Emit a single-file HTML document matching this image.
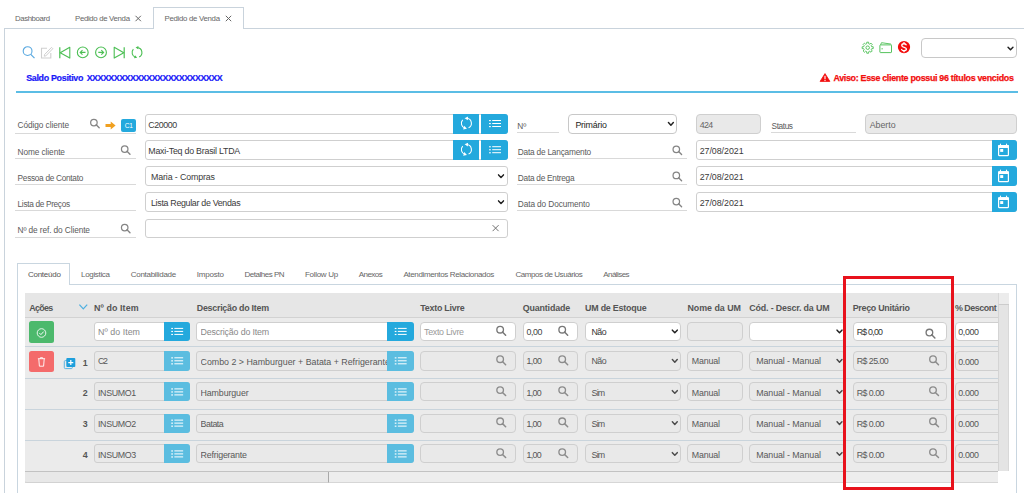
<!DOCTYPE html><html><head><meta charset="utf-8"><style>html,body{margin:0;padding:0;width:1024px;height:493px;overflow:hidden;background:#fff;font-family:"Liberation Sans", sans-serif;}</style></head><body>
<div style="position:absolute;left:15.00px;top:13.72px;height:9.36px;line-height:9.36px;font-size:7.8px;color:#666;font-weight:normal;white-space:nowrap;letter-spacing:-0.395px;">Dashboard</div>
<div style="position:absolute;left:75.00px;top:13.72px;height:9.36px;line-height:9.36px;font-size:7.8px;color:#666;font-weight:normal;white-space:nowrap;letter-spacing:-0.316px;">Pedido de Venda</div>
<svg style="position:absolute;left:138px;top:18px;overflow:visible" width="1" height="1"><g transform="translate(0.200 0.500)"><path d="M-2.7 -2.7L2.7 2.7M2.7 -2.7L-2.7 2.7" stroke="#666" stroke-width="1.0"/></g></svg>
<div style="position:absolute;left:4.00px;top:28.00px;width:1020.00px;height:1.00px;background:#c9d3dc"></div>
<div style="position:absolute;left:153.00px;top:7.00px;width:90.50px;height:22.00px;box-sizing:border-box;background:#fff;border:1px solid #c9d3dc;border-bottom:none"></div>
<div style="position:absolute;left:164.50px;top:13.72px;height:9.36px;line-height:9.36px;font-size:7.8px;color:#666;font-weight:normal;white-space:nowrap;letter-spacing:-0.280px;">Pedido de Venda</div>
<svg style="position:absolute;left:228px;top:18px;overflow:visible" width="1" height="1"><g transform="translate(0.500 0.500)"><path d="M-2.7 -2.7L2.7 2.7M2.7 -2.7L-2.7 2.7" stroke="#666" stroke-width="1.0"/></g></svg>
<div style="position:absolute;left:4.00px;top:28.00px;width:1.00px;height:465.00px;background:#c9d3dc"></div>
<svg style="position:absolute;left:20px;top:42px;overflow:visible" width="20" height="20"><g transform="translate(0.000 0.000)"><circle cx="7.6" cy="9.1" r="4.4" fill="none" stroke="#5aa9e0" stroke-width="1.1"/><line x1="10.8" y1="12.3" x2="14.5" y2="16.2" stroke="#5aa9e0" stroke-width="1.2"/></g></svg>
<svg style="position:absolute;left:40px;top:46px;overflow:visible" width="14" height="14"><g transform="translate(0.000 0.000)"><path d="M7 2.3H1.5V12H10.8V7" fill="none" stroke="#cfcfcf" stroke-width="1.1"/><path d="M4.5 8.6L11.5 1.4L12.8 2.7L5.8 9.9L4.3 10.2Z" fill="none" stroke="#cfcfcf" stroke-width="1"/></g></svg>
<svg style="position:absolute;left:58px;top:46px;overflow:visible" width="14" height="14"><g transform="translate(0.000 0.000)"><line x1="1.8" y1="1.2" x2="1.8" y2="12.2" stroke="#4cbf54" stroke-width="1.2"/><path d="M2.2 6.7L11.8 1.3V12.1Z" fill="none" stroke="#4cbf54" stroke-width="1.1" stroke-linejoin="round"/></g></svg>
<svg style="position:absolute;left:76px;top:46px;overflow:visible" width="14" height="14"><g transform="translate(0.000 0.000)"><circle cx="6.75" cy="6.4" r="5.4" fill="none" stroke="#4cbf54" stroke-width="1.1"/><path d="M9.5 6.4H4.3M6.5 4.2L4.2 6.4L6.5 8.6" fill="none" stroke="#4cbf54" stroke-width="1.1"/></g></svg>
<svg style="position:absolute;left:95px;top:46px;overflow:visible" width="14" height="14"><g transform="translate(0.000 0.000)"><circle cx="6" cy="6.4" r="5.4" fill="none" stroke="#4cbf54" stroke-width="1.1"/><path d="M3.3 6.4H8.5M6.3 4.2L8.6 6.4L6.3 8.6" fill="none" stroke="#4cbf54" stroke-width="1.1"/></g></svg>
<svg style="position:absolute;left:112px;top:46px;overflow:visible" width="14" height="14"><g transform="translate(0.000 0.000)"><line x1="12.2" y1="1.2" x2="12.2" y2="12.2" stroke="#4cbf54" stroke-width="1.2"/><path d="M11.8 6.7L2.2 1.3V12.1Z" fill="none" stroke="#4cbf54" stroke-width="1.1" stroke-linejoin="round"/></g></svg>
<svg style="position:absolute;left:137px;top:52px;overflow:visible" width="1" height="1"><g transform="translate(0.000 0.500)"><path d="M-3.64 -3.28A4.9 4.9 0 0 0 -1.51 4.66" fill="none" stroke="#4cbf54" stroke-width="1.1"/><path d="M2.15 4.40A4.9 4.9 0 0 0 0.34 -4.89" fill="none" stroke="#4cbf54" stroke-width="1.1"/><path d="M0.20 5.22L-2.96 5.87L-1.97 2.83Z" fill="#4cbf54"/><path d="M-1.45 -5.01L1.45 -6.41L1.23 -3.22Z" fill="#4cbf54"/></g></svg>
<div style="position:absolute;left:26.20px;top:73.26px;height:10.68px;line-height:10.68px;font-size:8.9px;color:#1818f8;font-weight:bold;white-space:nowrap;letter-spacing:-0.302px;-webkit-text-stroke:0.2px #1818f8">Saldo Positivo</div>
<div style="position:absolute;left:86.70px;top:73.26px;height:10.68px;line-height:10.68px;font-size:8.9px;color:#1818f8;font-weight:bold;white-space:nowrap;letter-spacing:-0.504px;-webkit-text-stroke:0.2px #1818f8">XXXXXXXXXXXXXXXXXXXXXXXXX</div>
<svg style="position:absolute;left:867px;top:47px;overflow:visible" width="1" height="1"><g transform="translate(0.700 0.700)"><path d="M3.98 -0.99L5.52 -0.92L5.52 0.92L3.98 0.99L3.51 2.11L4.56 3.26L3.26 4.56L2.11 3.51L0.99 3.98L0.92 5.52L-0.92 5.52L-0.99 3.98L-2.11 3.51L-3.26 4.56L-4.56 3.26L-3.51 2.11L-3.98 0.99L-5.52 0.92L-5.52 -0.92L-3.98 -0.99L-3.51 -2.11L-4.56 -3.26L-3.26 -4.56L-2.11 -3.51L-0.99 -3.98L-0.92 -5.52L0.92 -5.52L0.99 -3.98L2.11 -3.51L3.26 -4.56L4.56 -3.26L3.51 -2.11Z" fill="none" stroke="#4cbf54" stroke-width="0.9" stroke-linejoin="round"/><circle cx="0" cy="0" r="1.75" fill="none" stroke="#4cbf54" stroke-width="0.9"/></g></svg>
<svg style="position:absolute;left:879px;top:41px;overflow:visible" width="14" height="12"><g transform="translate(0.400 0.800)"><rect x="0.5" y="3.1" width="11.6" height="7.7" rx="0.6" fill="none" stroke="#4cbf54" stroke-width="0.95"/><path d="M1.2 3.1L2.1 0.9L11.2 2.2L12.1 3.1" fill="none" stroke="#4cbf54" stroke-width="0.9" stroke-linejoin="round"/><rect x="2.2" y="6.3" width="1" height="1.3" fill="#4cbf54"/></g></svg>
<svg style="position:absolute;left:904px;top:47px;overflow:visible" width="1" height="1"><g transform="translate(0.000 0.100)"><circle cx="0" cy="0" r="6.15" fill="#f20c0c"/><path d="M2.2 -2.3C1.6 -3.2 0.8 -3.4 0 -3.4C-1.3 -3.4 -2.2 -2.7 -2.2 -1.7C-2.2 0.9 2.4 -0.4 2.4 2.0C2.4 3.0 1.4 3.6 0 3.6C-1 3.6 -1.9 3.2 -2.4 2.4" fill="none" stroke="#fff" stroke-width="1.35" stroke-linecap="round"/><path d="M0 -5V-3.4M0 3.6V5.1" stroke="#fff" stroke-width="1.2"/></g></svg>
<div style="position:absolute;left:921.40px;top:38.20px;width:95.50px;height:20.20px;box-sizing:border-box;background:#fff;border:1px solid #c8c8c8;border-radius:4px;"></div>
<svg style="position:absolute;left:1010px;top:48px;overflow:visible" width="1" height="1"><g transform="translate(0.500 0.500)"><path d="M-2.45 -1.27L0 1.35L2.45 -1.27" fill="none" stroke="#222" stroke-width="1.45" stroke-linecap="round" stroke-linejoin="round"/></g></svg>
<svg style="position:absolute;left:819px;top:72px;overflow:visible" width="12" height="11"><g transform="translate(0.000 0.000)"><path d="M6 1.6L10.9 9.4H1.1Z" fill="#f20e0e" stroke="#f20e0e" stroke-width="0.8" stroke-linejoin="round"/><rect x="5.45" y="3.8" width="1.1" height="3.5" fill="#fff"/><rect x="5.45" y="8" width="1.1" height="1.1" fill="#fff"/></g></svg>
<div style="position:absolute;left:833.40px;top:73.16px;height:10.68px;line-height:10.68px;font-size:8.9px;color:#f20e0e;font-weight:bold;white-space:nowrap;letter-spacing:-0.301px;-webkit-text-stroke:0.25px #f20e0e">Aviso: Esse cliente possui 96 títulos vencidos</div>
<div style="position:absolute;left:15.70px;top:91.00px;width:1002.30px;height:2.00px;background:#5bbde5"></div>
<div style="position:absolute;left:17.60px;top:121.17px;height:9.96px;line-height:9.96px;font-size:8.3px;color:#5a5a5a;font-weight:normal;white-space:nowrap;letter-spacing:-0.085px;">Código cliente</div>
<div style="position:absolute;left:15.00px;top:132.90px;width:120.50px;height:1.00px;background:#d9d9d9"></div>
<svg style="position:absolute;left:93px;top:122px;overflow:visible" width="1" height="1"><g transform="translate(0.900 0.500)"><circle cx="0" cy="0" r="3.25" fill="none" stroke="#858585" stroke-width="1.25"/><line x1="2.30" y1="2.30" x2="5.29" y2="5.29" stroke="#858585" stroke-width="1.38" stroke-linecap="round"/></g></svg>
<svg style="position:absolute;left:105px;top:121px;overflow:visible" width="11" height="9"><g transform="translate(0.500 0.400)"><path d="M0 2.6H5.2V0L10.1 4.1L5.2 8.2V5.6H0Z" fill="#f0a020"/></g></svg>
<div style="position:absolute;left:121.00px;top:119.40px;width:14.50px;height:12.50px;background:#24a9dd;border-radius:2px"></div>
<div style="position:absolute;left:124.70px;top:121.84px;height:7.92px;line-height:7.92px;font-size:6.6px;color:#fff;font-weight:normal;white-space:nowrap;letter-spacing:-0.2px">C1</div>
<div style="position:absolute;left:17.60px;top:147.57px;height:9.96px;line-height:9.96px;font-size:8.3px;color:#5a5a5a;font-weight:normal;white-space:nowrap;letter-spacing:-0.094px;">Nome cliente</div>
<div style="position:absolute;left:15.00px;top:158.00px;width:120.50px;height:1.00px;background:#d9d9d9"></div>
<svg style="position:absolute;left:124px;top:149px;overflow:visible" width="1" height="1"><g transform="translate(0.700 0.000)"><circle cx="0" cy="0" r="3.25" fill="none" stroke="#858585" stroke-width="1.25"/><line x1="2.30" y1="2.30" x2="5.29" y2="5.29" stroke="#858585" stroke-width="1.38" stroke-linecap="round"/></g></svg>
<div style="position:absolute;left:17.60px;top:173.87px;height:9.96px;line-height:9.96px;font-size:8.3px;color:#5a5a5a;font-weight:normal;white-space:nowrap;letter-spacing:-0.306px;">Pessoa de Contato</div>
<div style="position:absolute;left:15.00px;top:183.90px;width:120.50px;height:1.00px;background:#d9d9d9"></div>
<div style="position:absolute;left:17.60px;top:199.87px;height:9.96px;line-height:9.96px;font-size:8.3px;color:#5a5a5a;font-weight:normal;white-space:nowrap;letter-spacing:-0.336px;">Lista de Preços</div>
<div style="position:absolute;left:15.00px;top:209.90px;width:120.50px;height:1.00px;background:#d9d9d9"></div>
<div style="position:absolute;left:17.60px;top:225.77px;height:9.96px;line-height:9.96px;font-size:8.3px;color:#5a5a5a;font-weight:normal;white-space:nowrap;letter-spacing:-0.107px;">Nº de ref. do Cliente</div>
<div style="position:absolute;left:15.00px;top:236.50px;width:120.50px;height:1.00px;background:#d9d9d9"></div>
<svg style="position:absolute;left:124px;top:227px;overflow:visible" width="1" height="1"><g transform="translate(0.700 0.500)"><circle cx="0" cy="0" r="3.25" fill="none" stroke="#858585" stroke-width="1.25"/><line x1="2.30" y1="2.30" x2="5.29" y2="5.29" stroke="#858585" stroke-width="1.38" stroke-linecap="round"/></g></svg>
<div style="position:absolute;left:145.30px;top:114.00px;width:362.30px;height:19.70px;box-sizing:border-box;background:#fff;border:1px solid #cfcfcf;border-radius:3px;"></div>
<div style="position:absolute;left:148.30px;top:119.74px;height:10.62px;line-height:10.62px;font-size:8.85px;color:#3a3a3a;font-weight:normal;white-space:nowrap;letter-spacing:-0.400px;">C20000</div>
<div style="position:absolute;left:452.50px;top:114.00px;width:26.20px;height:19.70px;background:#24a9dd"></div>
<div style="position:absolute;left:481.20px;top:114.00px;width:26.40px;height:19.70px;background:#24a9dd;border-radius:0 3px 3px 0"></div>
<svg style="position:absolute;left:466px;top:123px;overflow:visible" width="1" height="1"><g transform="translate(0.400 0.300)"><path d="M-3.72 -3.35A5.0 5.0 0 0 0 -1.55 4.76" fill="none" stroke="#fff" stroke-width="1.05"/><path d="M2.19 4.49A5.0 5.0 0 0 0 0.35 -4.99" fill="none" stroke="#fff" stroke-width="1.05"/><path d="M0.51 5.42L-3.28 6.21L-2.09 2.56Z" fill="#fff"/><path d="M-1.81 -5.14L1.68 -6.82L1.41 -2.99Z" fill="#fff"/></g></svg>
<svg style="position:absolute;left:495px;top:123px;overflow:visible" width="1" height="1"><g transform="translate(0.050 0.500)"><rect x="-5.95" y="-3.50" width="1.7" height="1.15" fill="#fff"/><rect x="-2.85" y="-3.50" width="8.80" height="1.0" fill="#fff"/><rect x="-5.95" y="-0.50" width="1.7" height="1.15" fill="#fff"/><rect x="-2.85" y="-0.50" width="8.80" height="1.0" fill="#fff"/><rect x="-5.95" y="2.50" width="1.7" height="1.15" fill="#fff"/><rect x="-2.85" y="2.50" width="8.80" height="1.0" fill="#fff"/></g></svg>
<div style="position:absolute;left:145.30px;top:140.20px;width:362.30px;height:19.70px;box-sizing:border-box;background:#fff;border:1px solid #cfcfcf;border-radius:3px;"></div>
<div style="position:absolute;left:148.30px;top:145.94px;height:10.62px;line-height:10.62px;font-size:8.85px;color:#3a3a3a;font-weight:normal;white-space:nowrap;letter-spacing:-0.237px;">Maxi-Teq do Brasil LTDA</div>
<div style="position:absolute;left:452.50px;top:140.20px;width:26.20px;height:19.70px;background:#24a9dd"></div>
<div style="position:absolute;left:481.20px;top:140.20px;width:26.40px;height:19.70px;background:#24a9dd;border-radius:0 3px 3px 0"></div>
<svg style="position:absolute;left:466px;top:149px;overflow:visible" width="1" height="1"><g transform="translate(0.400 0.500)"><path d="M-3.72 -3.35A5.0 5.0 0 0 0 -1.55 4.76" fill="none" stroke="#fff" stroke-width="1.05"/><path d="M2.19 4.49A5.0 5.0 0 0 0 0.35 -4.99" fill="none" stroke="#fff" stroke-width="1.05"/><path d="M0.51 5.42L-3.28 6.21L-2.09 2.56Z" fill="#fff"/><path d="M-1.81 -5.14L1.68 -6.82L1.41 -2.99Z" fill="#fff"/></g></svg>
<svg style="position:absolute;left:495px;top:149px;overflow:visible" width="1" height="1"><g transform="translate(0.050 0.700)"><rect x="-5.95" y="-3.50" width="1.7" height="1.15" fill="#fff"/><rect x="-2.85" y="-3.50" width="8.80" height="1.0" fill="#fff"/><rect x="-5.95" y="-0.50" width="1.7" height="1.15" fill="#fff"/><rect x="-2.85" y="-0.50" width="8.80" height="1.0" fill="#fff"/><rect x="-5.95" y="2.50" width="1.7" height="1.15" fill="#fff"/><rect x="-2.85" y="2.50" width="8.80" height="1.0" fill="#fff"/></g></svg>
<div style="position:absolute;left:145.30px;top:166.30px;width:362.30px;height:19.70px;box-sizing:border-box;background:#fff;border:1px solid #cfcfcf;border-radius:3px;"></div>
<div style="position:absolute;left:151.00px;top:172.04px;height:10.62px;line-height:10.62px;font-size:8.85px;color:#3a3a3a;font-weight:normal;white-space:nowrap;letter-spacing:-0.135px;">Maria - Compras</div>
<svg style="position:absolute;left:501px;top:176px;overflow:visible" width="1" height="1"><g transform="translate(0.000 0.150)"><path d="M-2.45 -1.27L0 1.35L2.45 -1.27" fill="none" stroke="#222" stroke-width="1.45" stroke-linecap="round" stroke-linejoin="round"/></g></svg>
<div style="position:absolute;left:145.30px;top:192.30px;width:362.30px;height:19.70px;box-sizing:border-box;background:#fff;border:1px solid #cfcfcf;border-radius:3px;"></div>
<div style="position:absolute;left:151.00px;top:198.04px;height:10.62px;line-height:10.62px;font-size:8.85px;color:#3a3a3a;font-weight:normal;white-space:nowrap;letter-spacing:-0.307px;">Lista Regular de Vendas</div>
<svg style="position:absolute;left:501px;top:202px;overflow:visible" width="1" height="1"><g transform="translate(0.000 0.150)"><path d="M-2.45 -1.27L0 1.35L2.45 -1.27" fill="none" stroke="#222" stroke-width="1.45" stroke-linecap="round" stroke-linejoin="round"/></g></svg>
<div style="position:absolute;left:145.30px;top:218.60px;width:362.30px;height:19.70px;box-sizing:border-box;background:#fff;border:1px solid #cfcfcf;border-radius:3px;"></div>
<svg style="position:absolute;left:495px;top:228px;overflow:visible" width="1" height="1"><g transform="translate(0.600 0.150)"><path d="M-3.0 -3.0L3.0 3.0M3.0 -3.0L-3.0 3.0" stroke="#6a6a6a" stroke-width="0.95"/></g></svg>
<div style="position:absolute;left:517.20px;top:121.57px;height:9.96px;line-height:9.96px;font-size:8.3px;color:#5a5a5a;font-weight:normal;white-space:nowrap;">Nº</div>
<div style="position:absolute;left:517.00px;top:131.80px;width:42.00px;height:1.00px;background:#d9d9d9"></div>
<div style="position:absolute;left:568.40px;top:114.00px;width:108.50px;height:19.70px;box-sizing:border-box;background:#fff;border:1px solid #c8c8c8;border-radius:4px;"></div>
<div style="position:absolute;left:575.40px;top:119.74px;height:10.62px;line-height:10.62px;font-size:8.85px;color:#222;font-weight:normal;white-space:nowrap;letter-spacing:-0.192px;">Primário</div>
<svg style="position:absolute;left:670px;top:123px;overflow:visible" width="1" height="1"><g transform="translate(0.900 0.800)"><path d="M-2.45 -1.27L0 1.35L2.45 -1.27" fill="none" stroke="#222" stroke-width="1.45" stroke-linecap="round" stroke-linejoin="round"/></g></svg>
<div style="position:absolute;left:696.20px;top:114.00px;width:65.20px;height:19.70px;box-sizing:border-box;background:#e9e9e9;border:1px solid #cfcfcf;border-radius:4px;"></div>
<div style="position:absolute;left:699.70px;top:119.74px;height:10.62px;line-height:10.62px;font-size:8.85px;color:#666;font-weight:normal;white-space:nowrap;letter-spacing:-0.633px;">424</div>
<div style="position:absolute;left:771.50px;top:121.57px;height:9.96px;line-height:9.96px;font-size:8.3px;color:#5a5a5a;font-weight:normal;white-space:nowrap;letter-spacing:-0.406px;">Status</div>
<div style="position:absolute;left:771.00px;top:131.80px;width:85.00px;height:1.00px;background:#d9d9d9"></div>
<div style="position:absolute;left:865.30px;top:114.00px;width:151.30px;height:19.70px;box-sizing:border-box;background:#e9e9e9;border:1px solid #cfcfcf;border-radius:4px;"></div>
<div style="position:absolute;left:869.70px;top:119.74px;height:10.62px;line-height:10.62px;font-size:8.85px;color:#666;font-weight:normal;white-space:nowrap;letter-spacing:-0.035px;">Aberto</div>
<div style="position:absolute;left:517.80px;top:147.57px;height:9.96px;line-height:9.96px;font-size:8.3px;color:#5a5a5a;font-weight:normal;white-space:nowrap;letter-spacing:-0.215px;">Data de Lançamento</div>
<div style="position:absolute;left:517.00px;top:158.00px;width:169.60px;height:1.00px;background:#d9d9d9"></div>
<svg style="position:absolute;left:676px;top:149px;overflow:visible" width="1" height="1"><g transform="translate(0.300 0.300)"><circle cx="0" cy="0" r="3.25" fill="none" stroke="#858585" stroke-width="1.25"/><line x1="2.30" y1="2.30" x2="5.29" y2="5.29" stroke="#858585" stroke-width="1.38" stroke-linecap="round"/></g></svg>
<div style="position:absolute;left:696.20px;top:140.20px;width:320.40px;height:19.70px;box-sizing:border-box;background:#fff;border:1px solid #cfcfcf;border-radius:3px;"></div>
<div style="position:absolute;left:699.70px;top:145.94px;height:10.62px;line-height:10.62px;font-size:8.85px;color:#3a3a3a;font-weight:normal;white-space:nowrap;letter-spacing:-0.044px;">27/08/2021</div>
<div style="position:absolute;left:992.20px;top:140.20px;width:24.40px;height:19.70px;background:#24a9dd;border-radius:0 3px 3px 0"></div>
<svg style="position:absolute;left:1003px;top:150px;overflow:visible" width="1" height="1"><g transform="translate(0.500 0.450)"><rect x="-4.9" y="-4.75" width="9.8" height="9.9" rx="0.9" fill="none" stroke="#fff" stroke-width="1.2"/><rect x="-5.5" y="-5.35" width="11" height="2.9" rx="0.8" fill="#fff"/><path d="M-3.8 -5.2L-3.3 -7H-2.8L-2.3 -5.2ZM2.3 -5.2L2.8 -7H3.3L3.8 -5.2Z" fill="#fff"/><rect x="-3.3" y="-1.45" width="3" height="2.9" fill="#fff"/></g></svg>
<div style="position:absolute;left:517.80px;top:173.87px;height:9.96px;line-height:9.96px;font-size:8.3px;color:#5a5a5a;font-weight:normal;white-space:nowrap;letter-spacing:-0.260px;">Data de Entrega</div>
<div style="position:absolute;left:517.00px;top:184.10px;width:169.60px;height:1.00px;background:#d9d9d9"></div>
<svg style="position:absolute;left:676px;top:175px;overflow:visible" width="1" height="1"><g transform="translate(0.300 0.400)"><circle cx="0" cy="0" r="3.25" fill="none" stroke="#858585" stroke-width="1.25"/><line x1="2.30" y1="2.30" x2="5.29" y2="5.29" stroke="#858585" stroke-width="1.38" stroke-linecap="round"/></g></svg>
<div style="position:absolute;left:696.20px;top:166.30px;width:320.40px;height:19.70px;box-sizing:border-box;background:#fff;border:1px solid #cfcfcf;border-radius:3px;"></div>
<div style="position:absolute;left:699.70px;top:172.04px;height:10.62px;line-height:10.62px;font-size:8.85px;color:#3a3a3a;font-weight:normal;white-space:nowrap;letter-spacing:-0.044px;">27/08/2021</div>
<div style="position:absolute;left:992.20px;top:166.30px;width:24.40px;height:19.70px;background:#24a9dd;border-radius:0 3px 3px 0"></div>
<svg style="position:absolute;left:1003px;top:176px;overflow:visible" width="1" height="1"><g transform="translate(0.500 0.550)"><rect x="-4.9" y="-4.75" width="9.8" height="9.9" rx="0.9" fill="none" stroke="#fff" stroke-width="1.2"/><rect x="-5.5" y="-5.35" width="11" height="2.9" rx="0.8" fill="#fff"/><path d="M-3.8 -5.2L-3.3 -7H-2.8L-2.3 -5.2ZM2.3 -5.2L2.8 -7H3.3L3.8 -5.2Z" fill="#fff"/><rect x="-3.3" y="-1.45" width="3" height="2.9" fill="#fff"/></g></svg>
<div style="position:absolute;left:517.80px;top:199.57px;height:9.96px;line-height:9.96px;font-size:8.3px;color:#5a5a5a;font-weight:normal;white-space:nowrap;letter-spacing:-0.108px;">Data do Documento</div>
<div style="position:absolute;left:517.00px;top:210.20px;width:169.60px;height:1.00px;background:#d9d9d9"></div>
<svg style="position:absolute;left:676px;top:201px;overflow:visible" width="1" height="1"><g transform="translate(0.300 0.500)"><circle cx="0" cy="0" r="3.25" fill="none" stroke="#858585" stroke-width="1.25"/><line x1="2.30" y1="2.30" x2="5.29" y2="5.29" stroke="#858585" stroke-width="1.38" stroke-linecap="round"/></g></svg>
<div style="position:absolute;left:696.20px;top:192.30px;width:320.40px;height:19.70px;box-sizing:border-box;background:#fff;border:1px solid #cfcfcf;border-radius:3px;"></div>
<div style="position:absolute;left:699.70px;top:198.04px;height:10.62px;line-height:10.62px;font-size:8.85px;color:#3a3a3a;font-weight:normal;white-space:nowrap;letter-spacing:-0.044px;">27/08/2021</div>
<div style="position:absolute;left:992.20px;top:192.30px;width:24.40px;height:19.70px;background:#24a9dd;border-radius:0 3px 3px 0"></div>
<svg style="position:absolute;left:1003px;top:202px;overflow:visible" width="1" height="1"><g transform="translate(0.500 0.550)"><rect x="-4.9" y="-4.75" width="9.8" height="9.9" rx="0.9" fill="none" stroke="#fff" stroke-width="1.2"/><rect x="-5.5" y="-5.35" width="11" height="2.9" rx="0.8" fill="#fff"/><path d="M-3.8 -5.2L-3.3 -7H-2.8L-2.3 -5.2ZM2.3 -5.2L2.8 -7H3.3L3.8 -5.2Z" fill="#fff"/><rect x="-3.3" y="-1.45" width="3" height="2.9" fill="#fff"/></g></svg>
<div style="position:absolute;left:17.40px;top:284.00px;width:999.40px;height:1.00px;background:#c9d6e0"></div>
<div style="position:absolute;left:17.40px;top:263.00px;width:1.00px;height:230.00px;background:#c9d6e0"></div>
<div style="position:absolute;left:1016.30px;top:284.00px;width:1.00px;height:209.00px;background:#c9d6e0"></div>
<div style="position:absolute;left:17.40px;top:263.00px;width:52.50px;height:22.00px;box-sizing:border-box;background:#fff;border:1px solid #c9d6e0;border-bottom:none"></div>
<div style="position:absolute;left:27.90px;top:270.05px;height:9.60px;line-height:9.60px;font-size:8.0px;color:#555;font-weight:normal;white-space:nowrap;letter-spacing:-0.242px;">Conteúdo</div>
<div style="position:absolute;left:81.00px;top:270.05px;height:9.60px;line-height:9.60px;font-size:8.0px;color:#666;font-weight:normal;white-space:nowrap;letter-spacing:-0.322px;">Logistica</div>
<div style="position:absolute;left:130.80px;top:270.05px;height:9.60px;line-height:9.60px;font-size:8.0px;color:#666;font-weight:normal;white-space:nowrap;letter-spacing:-0.294px;">Contabilidade</div>
<div style="position:absolute;left:196.70px;top:270.05px;height:9.60px;line-height:9.60px;font-size:8.0px;color:#666;font-weight:normal;white-space:nowrap;letter-spacing:-0.193px;">Imposto</div>
<div style="position:absolute;left:244.40px;top:270.05px;height:9.60px;line-height:9.60px;font-size:8.0px;color:#666;font-weight:normal;white-space:nowrap;letter-spacing:-0.471px;">Detalhes PN</div>
<div style="position:absolute;left:305.00px;top:270.05px;height:9.60px;line-height:9.60px;font-size:8.0px;color:#666;font-weight:normal;white-space:nowrap;letter-spacing:-0.296px;">Follow Up</div>
<div style="position:absolute;left:358.70px;top:270.05px;height:9.60px;line-height:9.60px;font-size:8.0px;color:#666;font-weight:normal;white-space:nowrap;letter-spacing:-0.537px;">Anexos</div>
<div style="position:absolute;left:403.40px;top:270.05px;height:9.60px;line-height:9.60px;font-size:8.0px;color:#666;font-weight:normal;white-space:nowrap;letter-spacing:-0.363px;">Atendimentos Relacionados</div>
<div style="position:absolute;left:515.40px;top:270.05px;height:9.60px;line-height:9.60px;font-size:8.0px;color:#666;font-weight:normal;white-space:nowrap;letter-spacing:-0.429px;">Campos de Usuários</div>
<div style="position:absolute;left:603.30px;top:270.05px;height:9.60px;line-height:9.60px;font-size:8.0px;color:#666;font-weight:normal;white-space:nowrap;letter-spacing:-0.563px;">Análises</div>
<div style="position:absolute;left:25.00px;top:293.00px;width:973.00px;height:178.50px;background:#ebebeb"></div>
<div style="position:absolute;left:25.00px;top:293.00px;width:973.00px;height:24.50px;background:#e6e6e6"></div>
<div style="position:absolute;left:25.00px;top:316.80px;width:973.00px;height:1.60px;background:#d2d2d2"></div>
<div style="position:absolute;left:29.20px;top:302.51px;height:10.68px;line-height:10.68px;font-size:8.9px;color:#555;font-weight:bold;white-space:nowrap;letter-spacing:-0.678px;">Ações</div>
<div style="position:absolute;left:94.00px;top:302.51px;height:10.68px;line-height:10.68px;font-size:8.9px;color:#555;font-weight:bold;white-space:nowrap;letter-spacing:0.100px;">Nº do Item</div>
<div style="position:absolute;left:196.80px;top:302.51px;height:10.68px;line-height:10.68px;font-size:8.9px;color:#555;font-weight:bold;white-space:nowrap;letter-spacing:-0.260px;">Descrição do Item</div>
<div style="position:absolute;left:420.20px;top:302.51px;height:10.68px;line-height:10.68px;font-size:8.9px;color:#555;font-weight:bold;white-space:nowrap;letter-spacing:-0.222px;">Texto Livre</div>
<div style="position:absolute;left:522.80px;top:302.51px;height:10.68px;line-height:10.68px;font-size:8.9px;color:#555;font-weight:bold;white-space:nowrap;letter-spacing:-0.162px;">Quantidade</div>
<div style="position:absolute;left:585.00px;top:302.51px;height:10.68px;line-height:10.68px;font-size:8.9px;color:#555;font-weight:bold;white-space:nowrap;letter-spacing:-0.207px;">UM de Estoque</div>
<div style="position:absolute;left:687.40px;top:302.51px;height:10.68px;line-height:10.68px;font-size:8.9px;color:#555;font-weight:bold;white-space:nowrap;letter-spacing:-0.022px;">Nome da UM</div>
<div style="position:absolute;left:749.30px;top:302.51px;height:10.68px;line-height:10.68px;font-size:8.9px;color:#555;font-weight:bold;white-space:nowrap;letter-spacing:-0.171px;">Cód. - Descr. da UM</div>
<div style="position:absolute;left:852.70px;top:302.51px;height:10.68px;line-height:10.68px;font-size:8.9px;color:#555;font-weight:bold;white-space:nowrap;letter-spacing:-0.272px;">Preço Unitário</div>
<div style="position:absolute;left:954.90px;top:302.51px;height:10.68px;line-height:10.68px;font-size:8.9px;color:#555;font-weight:bold;white-space:nowrap;letter-spacing:-0.437px;">% Descont</div>
<svg style="position:absolute;left:83px;top:306px;overflow:visible" width="1" height="1"><g transform="translate(0.300 0.800)"><path d="M-3.9 -2.145L0 2.145L3.9 -2.145" fill="none" stroke="#4fb0e0" stroke-width="1.25"/></g></svg>
<div style="position:absolute;left:25.00px;top:345.65px;width:973.00px;height:1.70px;background:#c9d4dc"></div>
<div style="position:absolute;left:25.00px;top:377.90px;width:973.00px;height:1.20px;background:#c9d4dc"></div>
<div style="position:absolute;left:25.00px;top:408.90px;width:973.00px;height:1.20px;background:#c9d4dc"></div>
<div style="position:absolute;left:25.00px;top:440.20px;width:973.00px;height:1.20px;background:#c9d4dc"></div>
<div style="position:absolute;left:25.00px;top:471.00px;width:973.00px;height:1.40px;background:#c2c2c2"></div>
<div style="position:absolute;left:28.90px;top:321.30px;width:25.10px;height:21.80px;background:#4cb96c;border-radius:2.5px"></div>
<svg style="position:absolute;left:41px;top:333px;overflow:visible" width="1" height="1"><g transform="translate(0.500 0.000)"><circle cx="0" cy="0" r="4.3" fill="none" stroke="#fff" stroke-width="0.85"/><path d="M-2.1 0.1L-0.6 1.6L2.2 -1.4" fill="none" stroke="#fff" stroke-width="0.95"/></g></svg>
<div style="position:absolute;left:94.20px;top:321.60px;width:96.00px;height:19.60px;box-sizing:border-box;background:#fff;border:1px solid #cfcfcf;border-radius:3px;"></div>
<div style="position:absolute;left:163.50px;top:321.60px;width:26.60px;height:19.60px;background:#24a9dd;border-radius:0 3px 3px 0"></div>
<svg style="position:absolute;left:177px;top:331px;overflow:visible" width="1" height="1"><g transform="translate(0.200 0.400)"><rect x="-5.95" y="-3.50" width="1.7" height="1.15" fill="#fff"/><rect x="-2.85" y="-3.50" width="8.80" height="1.0" fill="#fff"/><rect x="-5.95" y="-0.50" width="1.7" height="1.15" fill="#fff"/><rect x="-2.85" y="-0.50" width="8.80" height="1.0" fill="#fff"/><rect x="-5.95" y="2.50" width="1.7" height="1.15" fill="#fff"/><rect x="-2.85" y="2.50" width="8.80" height="1.0" fill="#fff"/></g></svg>
<div style="position:absolute;left:98.00px;top:327.09px;height:10.62px;line-height:10.62px;font-size:8.85px;color:#888;font-weight:normal;white-space:nowrap;letter-spacing:0.045px;">Nº do Item</div>
<div style="position:absolute;left:196.40px;top:321.60px;width:217.60px;height:19.60px;box-sizing:border-box;background:#fff;border:1px solid #cfcfcf;border-radius:3px;"></div>
<div style="position:absolute;left:200.5px;top:321.6px;width:186.5px;height:19.6px;overflow:hidden">
<div style="position:absolute;left:0.00px;top:5.69px;height:10.62px;line-height:10.62px;font-size:8.85px;color:#888;font-weight:normal;white-space:nowrap;letter-spacing:-0.164px;">Descrição do Item</div>
</div>
<div style="position:absolute;left:387.00px;top:321.60px;width:27.00px;height:19.60px;background:#24a9dd;border-radius:0 3px 3px 0"></div>
<svg style="position:absolute;left:400px;top:331px;overflow:visible" width="1" height="1"><g transform="translate(0.700 0.400)"><rect x="-5.95" y="-3.50" width="1.7" height="1.15" fill="#fff"/><rect x="-2.85" y="-3.50" width="8.80" height="1.0" fill="#fff"/><rect x="-5.95" y="-0.50" width="1.7" height="1.15" fill="#fff"/><rect x="-2.85" y="-0.50" width="8.80" height="1.0" fill="#fff"/><rect x="-5.95" y="2.50" width="1.7" height="1.15" fill="#fff"/><rect x="-2.85" y="2.50" width="8.80" height="1.0" fill="#fff"/></g></svg>
<div style="position:absolute;left:420.20px;top:321.60px;width:96.00px;height:19.60px;box-sizing:border-box;background:#fff;border:1px solid #cfcfcf;border-radius:4px;"></div>
<div style="position:absolute;left:424.00px;top:327.09px;height:10.62px;line-height:10.62px;font-size:8.85px;color:#999;font-weight:normal;white-space:nowrap;letter-spacing:-0.279px;">Texto Livre</div>
<svg style="position:absolute;left:500px;top:329px;overflow:visible" width="1" height="1"><g transform="translate(0.150 0.700)"><circle cx="0" cy="0" r="3.3" fill="none" stroke="#777" stroke-width="1.35"/><line x1="2.33" y1="2.33" x2="5.48" y2="5.48" stroke="#777" stroke-width="1.49" stroke-linecap="round"/></g></svg>
<div style="position:absolute;left:522.80px;top:321.60px;width:55.70px;height:19.60px;box-sizing:border-box;background:#fff;border:1px solid #cfcfcf;border-radius:4px;"></div>
<div style="position:absolute;left:526.50px;top:327.09px;height:10.62px;line-height:10.62px;font-size:8.85px;color:#444;font-weight:normal;white-space:nowrap;letter-spacing:-0.408px;">0,00</div>
<svg style="position:absolute;left:562px;top:329px;overflow:visible" width="1" height="1"><g transform="translate(0.200 0.700)"><circle cx="0" cy="0" r="3.3" fill="none" stroke="#777" stroke-width="1.35"/><line x1="2.33" y1="2.33" x2="5.48" y2="5.48" stroke="#777" stroke-width="1.49" stroke-linecap="round"/></g></svg>
<div style="position:absolute;left:585.00px;top:321.60px;width:95.60px;height:19.60px;box-sizing:border-box;background:#fff;border:1px solid #cfcfcf;border-radius:4px;"></div>
<div style="position:absolute;left:591.50px;top:327.09px;height:10.62px;line-height:10.62px;font-size:8.85px;color:#333;font-weight:normal;white-space:nowrap;letter-spacing:-0.518px;">Não</div>
<svg style="position:absolute;left:674px;top:331px;overflow:visible" width="1" height="1"><g transform="translate(0.800 0.400)"><path d="M-2.45 -1.27L0 1.35L2.45 -1.27" fill="none" stroke="#222" stroke-width="1.45" stroke-linecap="round" stroke-linejoin="round"/></g></svg>
<div style="position:absolute;left:687.40px;top:321.60px;width:55.50px;height:19.60px;box-sizing:border-box;background:#e9e9e9;border:1px solid #cfcfcf;border-radius:4px;"></div>
<div style="position:absolute;left:749.30px;top:321.60px;width:97.00px;height:19.60px;box-sizing:border-box;background:#fff;border:1px solid #cfcfcf;border-radius:4px;"></div>
<svg style="position:absolute;left:839px;top:331px;overflow:visible" width="1" height="1"><g transform="translate(0.500 0.400)"><path d="M-2.45 -1.27L0 1.35L2.45 -1.27" fill="none" stroke="#222" stroke-width="1.45" stroke-linecap="round" stroke-linejoin="round"/></g></svg>
<div style="position:absolute;left:852.70px;top:321.60px;width:94.70px;height:19.60px;box-sizing:border-box;background:#fff;border:1px solid #cfcfcf;border-radius:4px;"></div>
<div style="position:absolute;left:856.70px;top:327.09px;height:10.62px;line-height:10.62px;font-size:8.85px;color:#333;font-weight:normal;white-space:nowrap;letter-spacing:-0.783px;">R$ 0,00</div>
<svg style="position:absolute;left:929px;top:332px;overflow:visible" width="1" height="1"><g transform="translate(0.400 0.500)"><circle cx="0" cy="0" r="3.3" fill="none" stroke="#777" stroke-width="1.35"/><line x1="2.33" y1="2.33" x2="5.48" y2="5.48" stroke="#777" stroke-width="1.49" stroke-linecap="round"/></g></svg>
<div style="position:absolute;left:954.9px;top:321.6px;width:43.6px;height:19.6px;overflow:hidden">
<div style="position:absolute;left:0.00px;top:0.00px;width:60.00px;height:19.60px;box-sizing:border-box;background:#fff;border:1px solid #cfcfcf;border-radius:4px;"></div>
<div style="position:absolute;left:3.40px;top:5.69px;height:10.62px;line-height:10.62px;font-size:8.85px;color:#444;font-weight:normal;white-space:nowrap;letter-spacing:-0.362px;">0,000</div>
</div>
<div style="position:absolute;left:94.20px;top:351.00px;width:96.00px;height:19.60px;box-sizing:border-box;background:#e9e9e9;border:1px solid #cfcfcf;border-radius:3px;"></div>
<div style="position:absolute;left:163.50px;top:351.00px;width:26.60px;height:19.60px;background:#5bbde0;border-radius:0 3px 3px 0"></div>
<svg style="position:absolute;left:177px;top:360px;overflow:visible" width="1" height="1"><g transform="translate(0.200 0.800)"><rect x="-5.95" y="-3.50" width="1.7" height="1.15" fill="#fff"/><rect x="-2.85" y="-3.50" width="8.80" height="1.0" fill="#fff"/><rect x="-5.95" y="-0.50" width="1.7" height="1.15" fill="#fff"/><rect x="-2.85" y="-0.50" width="8.80" height="1.0" fill="#fff"/><rect x="-5.95" y="2.50" width="1.7" height="1.15" fill="#fff"/><rect x="-2.85" y="2.50" width="8.80" height="1.0" fill="#fff"/></g></svg>
<div style="position:absolute;left:98.00px;top:356.49px;height:10.62px;line-height:10.62px;font-size:8.85px;color:#585858;font-weight:normal;white-space:nowrap;letter-spacing:-1.413px;">C2</div>
<div style="position:absolute;left:196.40px;top:351.00px;width:217.60px;height:19.60px;box-sizing:border-box;background:#e9e9e9;border:1px solid #cfcfcf;border-radius:3px;"></div>
<div style="position:absolute;left:200.5px;top:351px;width:186.5px;height:19.6px;overflow:hidden">
<div style="position:absolute;left:0.00px;top:5.69px;height:10.62px;line-height:10.62px;font-size:8.85px;color:#585858;font-weight:normal;white-space:nowrap;letter-spacing:-0.003px;">Combo 2 &gt; Hamburguer + Batata + Refrigerante</div>
</div>
<div style="position:absolute;left:387.00px;top:351.00px;width:27.00px;height:19.60px;background:#5bbde0;border-radius:0 3px 3px 0"></div>
<svg style="position:absolute;left:400px;top:360px;overflow:visible" width="1" height="1"><g transform="translate(0.700 0.800)"><rect x="-5.95" y="-3.50" width="1.7" height="1.15" fill="#fff"/><rect x="-2.85" y="-3.50" width="8.80" height="1.0" fill="#fff"/><rect x="-5.95" y="-0.50" width="1.7" height="1.15" fill="#fff"/><rect x="-2.85" y="-0.50" width="8.80" height="1.0" fill="#fff"/><rect x="-5.95" y="2.50" width="1.7" height="1.15" fill="#fff"/><rect x="-2.85" y="2.50" width="8.80" height="1.0" fill="#fff"/></g></svg>
<div style="position:absolute;left:420.20px;top:351.00px;width:96.00px;height:19.60px;box-sizing:border-box;background:#e9e9e9;border:1px solid #cfcfcf;border-radius:4px;"></div>
<svg style="position:absolute;left:500px;top:359px;overflow:visible" width="1" height="1"><g transform="translate(0.150 0.200)"><circle cx="0" cy="0" r="3.3" fill="none" stroke="#8c8c8c" stroke-width="1.35"/><line x1="2.33" y1="2.33" x2="5.48" y2="5.48" stroke="#8c8c8c" stroke-width="1.49" stroke-linecap="round"/></g></svg>
<div style="position:absolute;left:522.80px;top:351.00px;width:55.70px;height:19.60px;box-sizing:border-box;background:#e9e9e9;border:1px solid #cfcfcf;border-radius:4px;"></div>
<div style="position:absolute;left:526.50px;top:356.49px;height:10.62px;line-height:10.62px;font-size:8.85px;color:#555;font-weight:normal;white-space:nowrap;letter-spacing:-0.608px;">1,00</div>
<svg style="position:absolute;left:562px;top:359px;overflow:visible" width="1" height="1"><g transform="translate(0.200 0.200)"><circle cx="0" cy="0" r="3.3" fill="none" stroke="#8c8c8c" stroke-width="1.35"/><line x1="2.33" y1="2.33" x2="5.48" y2="5.48" stroke="#8c8c8c" stroke-width="1.49" stroke-linecap="round"/></g></svg>
<div style="position:absolute;left:585.00px;top:351.00px;width:95.60px;height:19.60px;box-sizing:border-box;background:#e9e9e9;border:1px solid #cfcfcf;border-radius:4px;"></div>
<div style="position:absolute;left:591.50px;top:356.49px;height:10.62px;line-height:10.62px;font-size:8.85px;color:#555;font-weight:normal;white-space:nowrap;letter-spacing:-0.518px;">Não</div>
<svg style="position:absolute;left:674px;top:360px;overflow:visible" width="1" height="1"><g transform="translate(0.800 0.800)"><path d="M-2.45 -1.27L0 1.35L2.45 -1.27" fill="none" stroke="#4a4a4a" stroke-width="1.45" stroke-linecap="round" stroke-linejoin="round"/></g></svg>
<div style="position:absolute;left:687.40px;top:351.00px;width:55.50px;height:19.60px;box-sizing:border-box;background:#e9e9e9;border:1px solid #cfcfcf;border-radius:4px;"></div>
<div style="position:absolute;left:691.70px;top:356.49px;height:10.62px;line-height:10.62px;font-size:8.85px;color:#585858;font-weight:normal;white-space:nowrap;letter-spacing:-0.145px;">Manual</div>
<div style="position:absolute;left:749.30px;top:351.00px;width:97.00px;height:19.60px;box-sizing:border-box;background:#e9e9e9;border:1px solid #cfcfcf;border-radius:4px;"></div>
<div style="position:absolute;left:756.20px;top:356.49px;height:10.62px;line-height:10.62px;font-size:8.85px;color:#585858;font-weight:normal;white-space:nowrap;letter-spacing:-0.080px;">Manual - Manual</div>
<svg style="position:absolute;left:839px;top:360px;overflow:visible" width="1" height="1"><g transform="translate(0.500 0.800)"><path d="M-2.45 -1.27L0 1.35L2.45 -1.27" fill="none" stroke="#4a4a4a" stroke-width="1.45" stroke-linecap="round" stroke-linejoin="round"/></g></svg>
<div style="position:absolute;left:852.70px;top:351.00px;width:94.70px;height:19.60px;box-sizing:border-box;background:#e9e9e9;border:1px solid #cfcfcf;border-radius:4px;"></div>
<div style="position:absolute;left:856.70px;top:356.49px;height:10.62px;line-height:10.62px;font-size:8.85px;color:#585858;font-weight:normal;white-space:nowrap;letter-spacing:-0.560px;">R$ 25.00</div>
<svg style="position:absolute;left:933px;top:359px;overflow:visible" width="1" height="1"><g transform="translate(0.000 0.200)"><circle cx="0" cy="0" r="3.3" fill="none" stroke="#8c8c8c" stroke-width="1.35"/><line x1="2.33" y1="2.33" x2="5.48" y2="5.48" stroke="#8c8c8c" stroke-width="1.49" stroke-linecap="round"/></g></svg>
<div style="position:absolute;left:954.9px;top:351px;width:43.6px;height:19.6px;overflow:hidden">
<div style="position:absolute;left:0.00px;top:0.00px;width:60.00px;height:19.60px;box-sizing:border-box;background:#e9e9e9;border:1px solid #cfcfcf;border-radius:4px;"></div>
<div style="position:absolute;left:3.40px;top:5.69px;height:10.62px;line-height:10.62px;font-size:8.85px;color:#585858;font-weight:normal;white-space:nowrap;letter-spacing:-0.362px;">0.000</div>
</div>
<div style="position:absolute;left:94.20px;top:382.30px;width:96.00px;height:19.20px;box-sizing:border-box;background:#e9e9e9;border:1px solid #cfcfcf;border-radius:3px;"></div>
<div style="position:absolute;left:163.50px;top:382.30px;width:26.60px;height:19.20px;background:#5bbde0;border-radius:0 3px 3px 0"></div>
<svg style="position:absolute;left:177px;top:391px;overflow:visible" width="1" height="1"><g transform="translate(0.200 0.900)"><rect x="-5.95" y="-3.50" width="1.7" height="1.15" fill="#fff"/><rect x="-2.85" y="-3.50" width="8.80" height="1.0" fill="#fff"/><rect x="-5.95" y="-0.50" width="1.7" height="1.15" fill="#fff"/><rect x="-2.85" y="-0.50" width="8.80" height="1.0" fill="#fff"/><rect x="-5.95" y="2.50" width="1.7" height="1.15" fill="#fff"/><rect x="-2.85" y="2.50" width="8.80" height="1.0" fill="#fff"/></g></svg>
<div style="position:absolute;left:98.00px;top:387.59px;height:10.62px;line-height:10.62px;font-size:8.85px;color:#585858;font-weight:normal;white-space:nowrap;letter-spacing:-0.354px;">INSUMO1</div>
<div style="position:absolute;left:196.40px;top:382.30px;width:217.60px;height:19.20px;box-sizing:border-box;background:#e9e9e9;border:1px solid #cfcfcf;border-radius:3px;"></div>
<div style="position:absolute;left:200.5px;top:382.3px;width:186.5px;height:19.2px;overflow:hidden">
<div style="position:absolute;left:0.00px;top:5.49px;height:10.62px;line-height:10.62px;font-size:8.85px;color:#585858;font-weight:normal;white-space:nowrap;letter-spacing:-0.110px;">Hamburguer</div>
</div>
<div style="position:absolute;left:387.00px;top:382.30px;width:27.00px;height:19.20px;background:#5bbde0;border-radius:0 3px 3px 0"></div>
<svg style="position:absolute;left:400px;top:391px;overflow:visible" width="1" height="1"><g transform="translate(0.700 0.900)"><rect x="-5.95" y="-3.50" width="1.7" height="1.15" fill="#fff"/><rect x="-2.85" y="-3.50" width="8.80" height="1.0" fill="#fff"/><rect x="-5.95" y="-0.50" width="1.7" height="1.15" fill="#fff"/><rect x="-2.85" y="-0.50" width="8.80" height="1.0" fill="#fff"/><rect x="-5.95" y="2.50" width="1.7" height="1.15" fill="#fff"/><rect x="-2.85" y="2.50" width="8.80" height="1.0" fill="#fff"/></g></svg>
<div style="position:absolute;left:420.20px;top:382.30px;width:96.00px;height:19.20px;box-sizing:border-box;background:#e9e9e9;border:1px solid #cfcfcf;border-radius:4px;"></div>
<svg style="position:absolute;left:500px;top:390px;overflow:visible" width="1" height="1"><g transform="translate(0.150 0.100)"><circle cx="0" cy="0" r="3.3" fill="none" stroke="#8c8c8c" stroke-width="1.35"/><line x1="2.33" y1="2.33" x2="5.48" y2="5.48" stroke="#8c8c8c" stroke-width="1.49" stroke-linecap="round"/></g></svg>
<div style="position:absolute;left:522.80px;top:382.30px;width:55.70px;height:19.20px;box-sizing:border-box;background:#e9e9e9;border:1px solid #cfcfcf;border-radius:4px;"></div>
<div style="position:absolute;left:526.50px;top:387.59px;height:10.62px;line-height:10.62px;font-size:8.85px;color:#555;font-weight:normal;white-space:nowrap;letter-spacing:-0.642px;">1,00</div>
<svg style="position:absolute;left:562px;top:390px;overflow:visible" width="1" height="1"><g transform="translate(0.200 0.100)"><circle cx="0" cy="0" r="3.3" fill="none" stroke="#8c8c8c" stroke-width="1.35"/><line x1="2.33" y1="2.33" x2="5.48" y2="5.48" stroke="#8c8c8c" stroke-width="1.49" stroke-linecap="round"/></g></svg>
<div style="position:absolute;left:585.00px;top:382.30px;width:95.60px;height:19.20px;box-sizing:border-box;background:#e9e9e9;border:1px solid #cfcfcf;border-radius:4px;"></div>
<div style="position:absolute;left:591.50px;top:387.59px;height:10.62px;line-height:10.62px;font-size:8.85px;color:#555;font-weight:normal;white-space:nowrap;letter-spacing:-0.771px;">Sim</div>
<svg style="position:absolute;left:674px;top:391px;overflow:visible" width="1" height="1"><g transform="translate(0.800 0.900)"><path d="M-2.45 -1.27L0 1.35L2.45 -1.27" fill="none" stroke="#4a4a4a" stroke-width="1.45" stroke-linecap="round" stroke-linejoin="round"/></g></svg>
<div style="position:absolute;left:687.40px;top:382.30px;width:55.50px;height:19.20px;box-sizing:border-box;background:#e9e9e9;border:1px solid #cfcfcf;border-radius:4px;"></div>
<div style="position:absolute;left:691.70px;top:387.59px;height:10.62px;line-height:10.62px;font-size:8.85px;color:#585858;font-weight:normal;white-space:nowrap;letter-spacing:-0.145px;">Manual</div>
<div style="position:absolute;left:749.30px;top:382.30px;width:97.00px;height:19.20px;box-sizing:border-box;background:#e9e9e9;border:1px solid #cfcfcf;border-radius:4px;"></div>
<div style="position:absolute;left:756.20px;top:387.59px;height:10.62px;line-height:10.62px;font-size:8.85px;color:#585858;font-weight:normal;white-space:nowrap;letter-spacing:-0.080px;">Manual - Manual</div>
<svg style="position:absolute;left:839px;top:391px;overflow:visible" width="1" height="1"><g transform="translate(0.500 0.900)"><path d="M-2.45 -1.27L0 1.35L2.45 -1.27" fill="none" stroke="#4a4a4a" stroke-width="1.45" stroke-linecap="round" stroke-linejoin="round"/></g></svg>
<div style="position:absolute;left:852.70px;top:382.30px;width:94.70px;height:19.20px;box-sizing:border-box;background:#e9e9e9;border:1px solid #cfcfcf;border-radius:4px;"></div>
<div style="position:absolute;left:856.70px;top:387.59px;height:10.62px;line-height:10.62px;font-size:8.85px;color:#585858;font-weight:normal;white-space:nowrap;letter-spacing:-0.533px;">R$ 0.00</div>
<svg style="position:absolute;left:933px;top:390px;overflow:visible" width="1" height="1"><g transform="translate(0.000 0.100)"><circle cx="0" cy="0" r="3.3" fill="none" stroke="#8c8c8c" stroke-width="1.35"/><line x1="2.33" y1="2.33" x2="5.48" y2="5.48" stroke="#8c8c8c" stroke-width="1.49" stroke-linecap="round"/></g></svg>
<div style="position:absolute;left:954.9px;top:382.3px;width:43.6px;height:19.2px;overflow:hidden">
<div style="position:absolute;left:0.00px;top:0.00px;width:60.00px;height:19.20px;box-sizing:border-box;background:#e9e9e9;border:1px solid #cfcfcf;border-radius:4px;"></div>
<div style="position:absolute;left:3.40px;top:5.49px;height:10.62px;line-height:10.62px;font-size:8.85px;color:#585858;font-weight:normal;white-space:nowrap;letter-spacing:-0.362px;">0.000</div>
</div>
<div style="position:absolute;left:94.20px;top:413.50px;width:96.00px;height:19.20px;box-sizing:border-box;background:#e9e9e9;border:1px solid #cfcfcf;border-radius:3px;"></div>
<div style="position:absolute;left:163.50px;top:413.50px;width:26.60px;height:19.20px;background:#5bbde0;border-radius:0 3px 3px 0"></div>
<svg style="position:absolute;left:177px;top:423px;overflow:visible" width="1" height="1"><g transform="translate(0.200 0.100)"><rect x="-5.95" y="-3.50" width="1.7" height="1.15" fill="#fff"/><rect x="-2.85" y="-3.50" width="8.80" height="1.0" fill="#fff"/><rect x="-5.95" y="-0.50" width="1.7" height="1.15" fill="#fff"/><rect x="-2.85" y="-0.50" width="8.80" height="1.0" fill="#fff"/><rect x="-5.95" y="2.50" width="1.7" height="1.15" fill="#fff"/><rect x="-2.85" y="2.50" width="8.80" height="1.0" fill="#fff"/></g></svg>
<div style="position:absolute;left:98.00px;top:418.79px;height:10.62px;line-height:10.62px;font-size:8.85px;color:#585858;font-weight:normal;white-space:nowrap;letter-spacing:-0.354px;">INSUMO2</div>
<div style="position:absolute;left:196.40px;top:413.50px;width:217.60px;height:19.20px;box-sizing:border-box;background:#e9e9e9;border:1px solid #cfcfcf;border-radius:3px;"></div>
<div style="position:absolute;left:200.5px;top:413.5px;width:186.5px;height:19.2px;overflow:hidden">
<div style="position:absolute;left:0.00px;top:5.49px;height:10.62px;line-height:10.62px;font-size:8.85px;color:#585858;font-weight:normal;white-space:nowrap;letter-spacing:-0.457px;">Batata</div>
</div>
<div style="position:absolute;left:387.00px;top:413.50px;width:27.00px;height:19.20px;background:#5bbde0;border-radius:0 3px 3px 0"></div>
<svg style="position:absolute;left:400px;top:423px;overflow:visible" width="1" height="1"><g transform="translate(0.700 0.100)"><rect x="-5.95" y="-3.50" width="1.7" height="1.15" fill="#fff"/><rect x="-2.85" y="-3.50" width="8.80" height="1.0" fill="#fff"/><rect x="-5.95" y="-0.50" width="1.7" height="1.15" fill="#fff"/><rect x="-2.85" y="-0.50" width="8.80" height="1.0" fill="#fff"/><rect x="-5.95" y="2.50" width="1.7" height="1.15" fill="#fff"/><rect x="-2.85" y="2.50" width="8.80" height="1.0" fill="#fff"/></g></svg>
<div style="position:absolute;left:420.20px;top:413.50px;width:96.00px;height:19.20px;box-sizing:border-box;background:#e9e9e9;border:1px solid #cfcfcf;border-radius:4px;"></div>
<svg style="position:absolute;left:500px;top:421px;overflow:visible" width="1" height="1"><g transform="translate(0.150 0.300)"><circle cx="0" cy="0" r="3.3" fill="none" stroke="#8c8c8c" stroke-width="1.35"/><line x1="2.33" y1="2.33" x2="5.48" y2="5.48" stroke="#8c8c8c" stroke-width="1.49" stroke-linecap="round"/></g></svg>
<div style="position:absolute;left:522.80px;top:413.50px;width:55.70px;height:19.20px;box-sizing:border-box;background:#e9e9e9;border:1px solid #cfcfcf;border-radius:4px;"></div>
<div style="position:absolute;left:526.50px;top:418.79px;height:10.62px;line-height:10.62px;font-size:8.85px;color:#555;font-weight:normal;white-space:nowrap;letter-spacing:-0.642px;">1,00</div>
<svg style="position:absolute;left:562px;top:421px;overflow:visible" width="1" height="1"><g transform="translate(0.200 0.300)"><circle cx="0" cy="0" r="3.3" fill="none" stroke="#8c8c8c" stroke-width="1.35"/><line x1="2.33" y1="2.33" x2="5.48" y2="5.48" stroke="#8c8c8c" stroke-width="1.49" stroke-linecap="round"/></g></svg>
<div style="position:absolute;left:585.00px;top:413.50px;width:95.60px;height:19.20px;box-sizing:border-box;background:#e9e9e9;border:1px solid #cfcfcf;border-radius:4px;"></div>
<div style="position:absolute;left:591.50px;top:418.79px;height:10.62px;line-height:10.62px;font-size:8.85px;color:#555;font-weight:normal;white-space:nowrap;letter-spacing:-0.771px;">Sim</div>
<svg style="position:absolute;left:674px;top:423px;overflow:visible" width="1" height="1"><g transform="translate(0.800 0.100)"><path d="M-2.45 -1.27L0 1.35L2.45 -1.27" fill="none" stroke="#4a4a4a" stroke-width="1.45" stroke-linecap="round" stroke-linejoin="round"/></g></svg>
<div style="position:absolute;left:687.40px;top:413.50px;width:55.50px;height:19.20px;box-sizing:border-box;background:#e9e9e9;border:1px solid #cfcfcf;border-radius:4px;"></div>
<div style="position:absolute;left:691.70px;top:418.79px;height:10.62px;line-height:10.62px;font-size:8.85px;color:#585858;font-weight:normal;white-space:nowrap;letter-spacing:-0.145px;">Manual</div>
<div style="position:absolute;left:749.30px;top:413.50px;width:97.00px;height:19.20px;box-sizing:border-box;background:#e9e9e9;border:1px solid #cfcfcf;border-radius:4px;"></div>
<div style="position:absolute;left:756.20px;top:418.79px;height:10.62px;line-height:10.62px;font-size:8.85px;color:#585858;font-weight:normal;white-space:nowrap;letter-spacing:-0.080px;">Manual - Manual</div>
<svg style="position:absolute;left:839px;top:423px;overflow:visible" width="1" height="1"><g transform="translate(0.500 0.100)"><path d="M-2.45 -1.27L0 1.35L2.45 -1.27" fill="none" stroke="#4a4a4a" stroke-width="1.45" stroke-linecap="round" stroke-linejoin="round"/></g></svg>
<div style="position:absolute;left:852.70px;top:413.50px;width:94.70px;height:19.20px;box-sizing:border-box;background:#e9e9e9;border:1px solid #cfcfcf;border-radius:4px;"></div>
<div style="position:absolute;left:856.70px;top:418.79px;height:10.62px;line-height:10.62px;font-size:8.85px;color:#585858;font-weight:normal;white-space:nowrap;letter-spacing:-0.533px;">R$ 0.00</div>
<svg style="position:absolute;left:933px;top:421px;overflow:visible" width="1" height="1"><g transform="translate(0.000 0.300)"><circle cx="0" cy="0" r="3.3" fill="none" stroke="#8c8c8c" stroke-width="1.35"/><line x1="2.33" y1="2.33" x2="5.48" y2="5.48" stroke="#8c8c8c" stroke-width="1.49" stroke-linecap="round"/></g></svg>
<div style="position:absolute;left:954.9px;top:413.5px;width:43.6px;height:19.2px;overflow:hidden">
<div style="position:absolute;left:0.00px;top:0.00px;width:60.00px;height:19.20px;box-sizing:border-box;background:#e9e9e9;border:1px solid #cfcfcf;border-radius:4px;"></div>
<div style="position:absolute;left:3.40px;top:5.49px;height:10.62px;line-height:10.62px;font-size:8.85px;color:#585858;font-weight:normal;white-space:nowrap;letter-spacing:-0.362px;">0.000</div>
</div>
<div style="position:absolute;left:94.20px;top:444.30px;width:96.00px;height:19.20px;box-sizing:border-box;background:#e9e9e9;border:1px solid #cfcfcf;border-radius:3px;"></div>
<div style="position:absolute;left:163.50px;top:444.30px;width:26.60px;height:19.20px;background:#5bbde0;border-radius:0 3px 3px 0"></div>
<svg style="position:absolute;left:177px;top:453px;overflow:visible" width="1" height="1"><g transform="translate(0.200 0.900)"><rect x="-5.95" y="-3.50" width="1.7" height="1.15" fill="#fff"/><rect x="-2.85" y="-3.50" width="8.80" height="1.0" fill="#fff"/><rect x="-5.95" y="-0.50" width="1.7" height="1.15" fill="#fff"/><rect x="-2.85" y="-0.50" width="8.80" height="1.0" fill="#fff"/><rect x="-5.95" y="2.50" width="1.7" height="1.15" fill="#fff"/><rect x="-2.85" y="2.50" width="8.80" height="1.0" fill="#fff"/></g></svg>
<div style="position:absolute;left:98.00px;top:449.59px;height:10.62px;line-height:10.62px;font-size:8.85px;color:#585858;font-weight:normal;white-space:nowrap;letter-spacing:-0.354px;">INSUMO3</div>
<div style="position:absolute;left:196.40px;top:444.30px;width:217.60px;height:19.20px;box-sizing:border-box;background:#e9e9e9;border:1px solid #cfcfcf;border-radius:3px;"></div>
<div style="position:absolute;left:200.5px;top:444.3px;width:186.5px;height:19.2px;overflow:hidden">
<div style="position:absolute;left:0.00px;top:5.49px;height:10.62px;line-height:10.62px;font-size:8.85px;color:#585858;font-weight:normal;white-space:nowrap;letter-spacing:-0.200px;">Refrigerante</div>
</div>
<div style="position:absolute;left:387.00px;top:444.30px;width:27.00px;height:19.20px;background:#5bbde0;border-radius:0 3px 3px 0"></div>
<svg style="position:absolute;left:400px;top:453px;overflow:visible" width="1" height="1"><g transform="translate(0.700 0.900)"><rect x="-5.95" y="-3.50" width="1.7" height="1.15" fill="#fff"/><rect x="-2.85" y="-3.50" width="8.80" height="1.0" fill="#fff"/><rect x="-5.95" y="-0.50" width="1.7" height="1.15" fill="#fff"/><rect x="-2.85" y="-0.50" width="8.80" height="1.0" fill="#fff"/><rect x="-5.95" y="2.50" width="1.7" height="1.15" fill="#fff"/><rect x="-2.85" y="2.50" width="8.80" height="1.0" fill="#fff"/></g></svg>
<div style="position:absolute;left:420.20px;top:444.30px;width:96.00px;height:19.20px;box-sizing:border-box;background:#e9e9e9;border:1px solid #cfcfcf;border-radius:4px;"></div>
<svg style="position:absolute;left:500px;top:452px;overflow:visible" width="1" height="1"><g transform="translate(0.150 0.100)"><circle cx="0" cy="0" r="3.3" fill="none" stroke="#8c8c8c" stroke-width="1.35"/><line x1="2.33" y1="2.33" x2="5.48" y2="5.48" stroke="#8c8c8c" stroke-width="1.49" stroke-linecap="round"/></g></svg>
<div style="position:absolute;left:522.80px;top:444.30px;width:55.70px;height:19.20px;box-sizing:border-box;background:#e9e9e9;border:1px solid #cfcfcf;border-radius:4px;"></div>
<div style="position:absolute;left:526.50px;top:449.59px;height:10.62px;line-height:10.62px;font-size:8.85px;color:#555;font-weight:normal;white-space:nowrap;letter-spacing:-0.642px;">1,00</div>
<svg style="position:absolute;left:562px;top:452px;overflow:visible" width="1" height="1"><g transform="translate(0.200 0.100)"><circle cx="0" cy="0" r="3.3" fill="none" stroke="#8c8c8c" stroke-width="1.35"/><line x1="2.33" y1="2.33" x2="5.48" y2="5.48" stroke="#8c8c8c" stroke-width="1.49" stroke-linecap="round"/></g></svg>
<div style="position:absolute;left:585.00px;top:444.30px;width:95.60px;height:19.20px;box-sizing:border-box;background:#e9e9e9;border:1px solid #cfcfcf;border-radius:4px;"></div>
<div style="position:absolute;left:591.50px;top:449.59px;height:10.62px;line-height:10.62px;font-size:8.85px;color:#555;font-weight:normal;white-space:nowrap;letter-spacing:-0.771px;">Sim</div>
<svg style="position:absolute;left:674px;top:453px;overflow:visible" width="1" height="1"><g transform="translate(0.800 0.900)"><path d="M-2.45 -1.27L0 1.35L2.45 -1.27" fill="none" stroke="#4a4a4a" stroke-width="1.45" stroke-linecap="round" stroke-linejoin="round"/></g></svg>
<div style="position:absolute;left:687.40px;top:444.30px;width:55.50px;height:19.20px;box-sizing:border-box;background:#e9e9e9;border:1px solid #cfcfcf;border-radius:4px;"></div>
<div style="position:absolute;left:691.70px;top:449.59px;height:10.62px;line-height:10.62px;font-size:8.85px;color:#585858;font-weight:normal;white-space:nowrap;letter-spacing:-0.145px;">Manual</div>
<div style="position:absolute;left:749.30px;top:444.30px;width:97.00px;height:19.20px;box-sizing:border-box;background:#e9e9e9;border:1px solid #cfcfcf;border-radius:4px;"></div>
<div style="position:absolute;left:756.20px;top:449.59px;height:10.62px;line-height:10.62px;font-size:8.85px;color:#585858;font-weight:normal;white-space:nowrap;letter-spacing:-0.080px;">Manual - Manual</div>
<svg style="position:absolute;left:839px;top:453px;overflow:visible" width="1" height="1"><g transform="translate(0.500 0.900)"><path d="M-2.45 -1.27L0 1.35L2.45 -1.27" fill="none" stroke="#4a4a4a" stroke-width="1.45" stroke-linecap="round" stroke-linejoin="round"/></g></svg>
<div style="position:absolute;left:852.70px;top:444.30px;width:94.70px;height:19.20px;box-sizing:border-box;background:#e9e9e9;border:1px solid #cfcfcf;border-radius:4px;"></div>
<div style="position:absolute;left:856.70px;top:449.59px;height:10.62px;line-height:10.62px;font-size:8.85px;color:#585858;font-weight:normal;white-space:nowrap;letter-spacing:-0.533px;">R$ 0.00</div>
<svg style="position:absolute;left:933px;top:452px;overflow:visible" width="1" height="1"><g transform="translate(0.000 0.100)"><circle cx="0" cy="0" r="3.3" fill="none" stroke="#8c8c8c" stroke-width="1.35"/><line x1="2.33" y1="2.33" x2="5.48" y2="5.48" stroke="#8c8c8c" stroke-width="1.49" stroke-linecap="round"/></g></svg>
<div style="position:absolute;left:954.9px;top:444.3px;width:43.6px;height:19.2px;overflow:hidden">
<div style="position:absolute;left:0.00px;top:0.00px;width:60.00px;height:19.20px;box-sizing:border-box;background:#e9e9e9;border:1px solid #cfcfcf;border-radius:4px;"></div>
<div style="position:absolute;left:3.40px;top:5.49px;height:10.62px;line-height:10.62px;font-size:8.85px;color:#585858;font-weight:normal;white-space:nowrap;letter-spacing:-0.362px;">0.000</div>
</div>
<div style="position:absolute;left:82.80px;top:357.69px;height:10.62px;line-height:10.62px;font-size:8.85px;color:#555;font-weight:bold;white-space:nowrap;">1</div>
<div style="position:absolute;left:82.80px;top:388.49px;height:10.62px;line-height:10.62px;font-size:8.85px;color:#555;font-weight:bold;white-space:nowrap;">2</div>
<div style="position:absolute;left:82.80px;top:419.49px;height:10.62px;line-height:10.62px;font-size:8.85px;color:#555;font-weight:bold;white-space:nowrap;">3</div>
<div style="position:absolute;left:82.80px;top:450.49px;height:10.62px;line-height:10.62px;font-size:8.85px;color:#555;font-weight:bold;white-space:nowrap;">4</div>
<div style="position:absolute;left:28.90px;top:350.70px;width:25.10px;height:21.70px;background:#f46b6b;border-radius:2.5px"></div>
<svg style="position:absolute;left:41px;top:362px;overflow:visible" width="1" height="1"><g transform="translate(0.500 0.000)"><path d="M-3.6 -3.3H3.6M-1.1 -3.3V-4.3H1.1V-3.3M-2.7 -3L-2.1 4.2H2.1L2.7 -3" fill="none" stroke="#fff" stroke-width="0.9" stroke-linejoin="round"/></g></svg>
<svg style="position:absolute;left:63px;top:357px;overflow:visible" width="12" height="12"><g transform="translate(0.800 0.600)"><rect x="0.5" y="3" width="8" height="8" rx="1" fill="none" stroke="#5ab4e0" stroke-width="1"/><rect x="2.5" y="0.5" width="9" height="9" rx="1" fill="#1e9fdc"/><path d="M7 2.5V7.5M4.5 5H9.5" stroke="#fff" stroke-width="1.2"/></g></svg>
<div style="position:absolute;left:998.00px;top:293.00px;width:10.50px;height:178.30px;background:#e4e4e4;border-left:1px solid #d4d4d4;border-right:1px solid #d8d8d8;box-sizing:border-box"></div>
<div style="position:absolute;left:998.00px;top:293.00px;width:10.50px;height:11.80px;background:#ececec;border-bottom:1px solid #cccccc;border-left:1px solid #d8d8d8;box-sizing:border-box"></div>
<div style="position:absolute;left:25.00px;top:471.50px;width:973.00px;height:11.00px;background:#ededed;border-bottom:1px solid #d6d6d6;box-sizing:border-box"></div>
<div style="position:absolute;left:25.00px;top:472.00px;width:304.00px;height:10.50px;background:#e8e8e8;border-right:1px solid #a8a8a8;border-bottom:1px solid #d2d2d2;border-radius:0 0 0 2px;box-sizing:border-box"></div>
<div style="position:absolute;left:843.00px;top:276.30px;width:111.00px;height:213.70px;box-sizing:border-box;border:3px solid #e8121c"></div>
</body></html>
